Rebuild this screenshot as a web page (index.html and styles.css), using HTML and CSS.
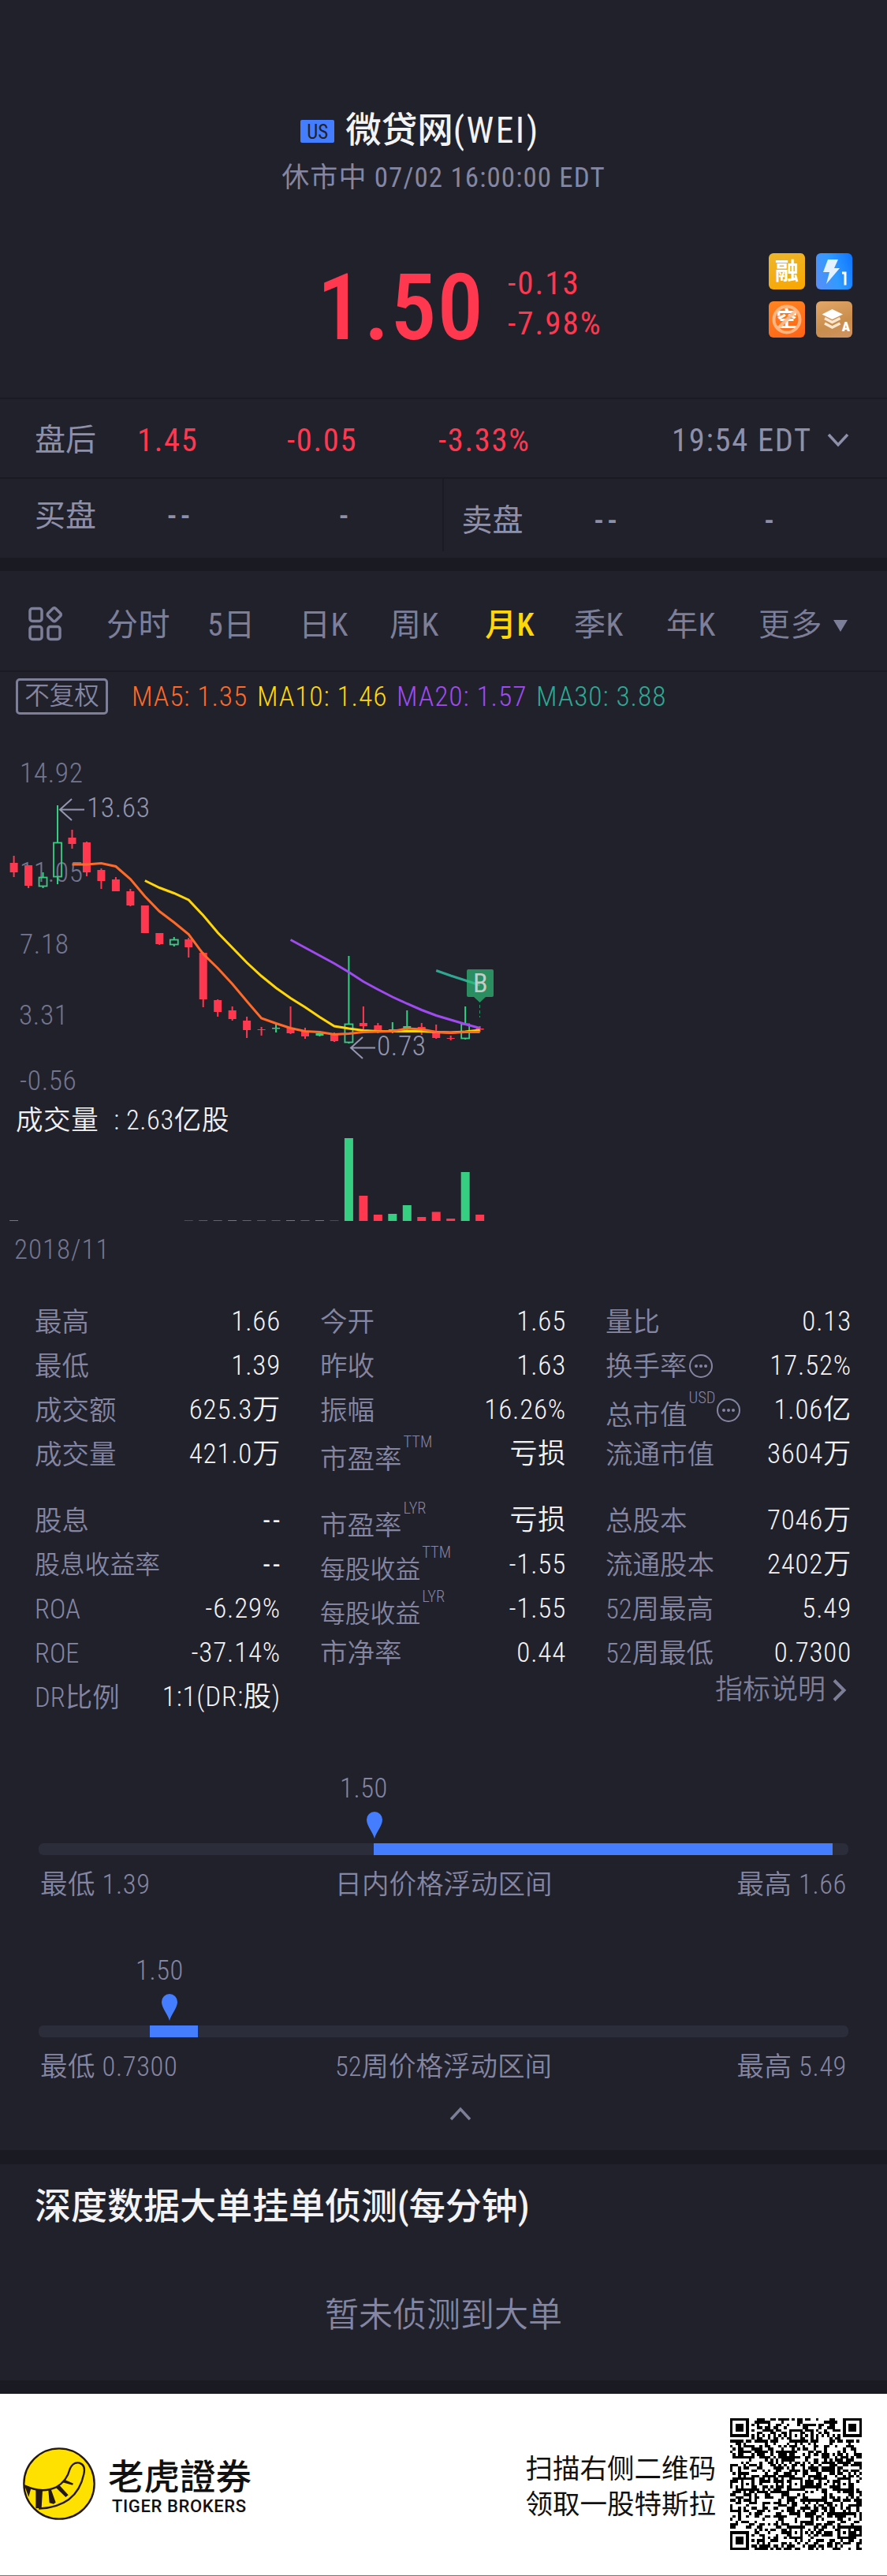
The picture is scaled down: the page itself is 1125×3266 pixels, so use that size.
FILE: index.html
```
<!DOCTYPE html>
<html lang="zh-CN">
<head>
    <meta charset="UTF-8">
    <meta name="viewport" content="width=device-width, initial-scale=1.0">
    <title>微贷网(WEI)</title>
    <link rel="stylesheet" href="styles.css">
</head>
<body>
<header class="quote">
    <div class="name"><span class="market">US</span><h1>微贷网<span>(WEI)</span></h1></div>
    <div class="status">休市中 07/02 16:00:00 EDT</div>
    <div class="price-row">
        <div class="price">1.50</div>
        <div class="change">
            <div>-0.13</div>
            <div>-7.98%</div>
        </div>
        <div class="tags">
            <div class="tag tag-margin">融</div>
            <div class="tag tag-level">
                <svg width="46" height="46" viewBox="0 0 46 46">
                    <path d="M15 8h13l-5 11h7L13 39l4-15H9z" fill="#e4f1ff"/>
                    <path d="M33 25h4v15.500" fill="none" stroke="#fff" stroke-width="3"/>
                </svg>
            </div>
            <div class="tag tag-short">空
                <svg width="46" height="46" viewBox="0 0 46 46">
                    <g fill="none" stroke="#ffbd8c" stroke-width="4" opacity=".9">
                        <circle cx="23" cy="23" r="16.500"/>
                        <path d="M11.500 34.500l23-23"/>
                    </g>
                </svg>
            </div>
            <div class="tag tag-depth">
                <svg width="46" height="46" viewBox="0 0 46 46">
                    <path d="M20.500 10L34 16.500 20.500 23 7.500 16.500z" fill="#fff"/>
                    <path d="M11 21.500l9.500 5 10-5M11 28l9.500 5 10-5" fill="none" stroke="#fbe6d0" stroke-width="3.500"/>
                </svg>
                <b>A</b>
            </div>
        </div>
    </div>
</header>

<section class="after">
    <span class="label">盘后</span>
    <span class="down">1.45</span>
    <span class="down">-0.05</span>
    <span class="down">-3.33%</span>
    <span class="time">19:54 EDT</span>
    <svg width="28" height="18" viewBox="0 0 28 18"><path d="M2 2l12 13L26 2" fill="none" stroke="#8e90aa" stroke-width="3.500"/></svg>
</section>
<section class="book">
    <div class="side buy"><span>买盘</span><b>--</b><b>-</b></div>
    <div class="side sell"><span>卖盘</span><b>--</b><b>-</b></div>
</section>

<nav class="tabs">
    <svg width="44" height="44" viewBox="0 0 44 44">
        <g fill="none" stroke="#7d7f99" stroke-width="3.500">
            <rect x="2" y="2.500" width="15" height="16" rx="3"/>
            <rect x="2" y="25.500" width="15" height="16" rx="3"/>
            <rect x="25" y="25.500" width="15" height="16" rx="3"/>
            <rect x="26" y="3.500" width="13.500" height="13.500" rx="2.500" transform="rotate(45 32.800 10.300)"/>
        </g>
    </svg>
    <span>分时</span>
    <span>5日</span>
    <span>日K</span>
    <span>周K</span>
    <span class="active">月K</span>
    <span>季K</span>
    <span>年K</span>
    <span class="more">更多<i></i></span>
</nav>

<section class="chart">
    <div class="ma">
        <span class="adjust">不复权</span>
        <span class="ma5">MA5: 1.35</span>
        <span class="ma10">MA10: 1.46</span>
        <span class="ma20">MA20: 1.57</span>
        <span class="ma30">MA30: 3.88</span>
    </div>
    <svg class="kline" width="1125" height="480" viewBox="0 0 1125 480">
        <g class="axis">
            <text x="25" y="61.500">14.92</text>
            <text x="25" y="188">11.05</text>
            <text x="25" y="279">7.18</text>
            <text x="24" y="369">3.31</text>
            <text x="25" y="452">-0.56</text>
        </g>
        <g id="candles"></g>
        <g id="lines"></g>
        <g class="marks">
            <path d="M107 96.500H76M91 83L76 96.500 91 110"/>
            <text x="110" y="106">13.63</text>
            <path d="M476 398.500H445M460 385l-15 13.500 15 13.500"/>
            <text x="478" y="407.500">0.73</text>
        </g>
        <g class="buy-flag">
            <path d="M594 299h30q2 0 2 2v31q0 2-2 2h-8l-7.500 7-7.500-7h-7q-2 0-2-2v-31q0-2 2-2z"/>
            <path class="dash" d="M608.500 344v16"/>
            <text x="609.500" y="328">B</text>
        </g>
    </svg>
    <div class="volume-title">成交量<span>:</span>2.63亿股</div>
    <svg class="volume" width="1125" height="110" viewBox="0 0 1125 110"><g id="bars"></g></svg>
    <div class="date">2018/11</div>
</section>

<section class="stats">
    <div class="row"><span>最高</span><b>1.66</b></div>
    <div class="row"><span>今开</span><b>1.65</b></div>
    <div class="row"><span>量比</span><b>0.13</b></div>

    <div class="row"><span>最低</span><b>1.39</b></div>
    <div class="row"><span>昨收</span><b>1.63</b></div>
    <div class="row"><span>换手率</span><svg class="tip" width="32" height="32" viewBox="0 0 32 32"><use href="#tip"/></svg><b>17.52%</b></div>

    <div class="row"><span>成交额</span><b>625.3万</b></div>
    <div class="row"><span>振幅</span><b>16.26%</b></div>
    <div class="row"><span class="low">总市值</span><sup>USD</sup><svg class="tip" width="32" height="32" viewBox="0 0 32 32"><use href="#tip"/></svg><b>1.06亿</b></div>

    <div class="row"><span>成交量</span><b>421.0万</b></div>
    <div class="row"><span class="low">市盈率</span><sup>TTM</sup><b>亏损</b></div>
    <div class="row"><span>流通市值</span><b>3604万</b></div>

    <div class="row gap"><span>股息</span><b class="empty">--</b></div>
    <div class="row gap"><span class="low">市盈率</span><sup>LYR</sup><b>亏损</b></div>
    <div class="row gap"><span>总股本</span><b>7046万</b></div>

    <div class="row"><span class="small">股息收益率</span><b class="empty">--</b></div>
    <div class="row"><span class="low small">每股收益</span><sup>TTM</sup><b>-1.55</b></div>
    <div class="row"><span>流通股本</span><b>2402万</b></div>

    <div class="row"><span>ROA</span><b>-6.29%</b></div>
    <div class="row"><span class="low small">每股收益</span><sup>LYR</sup><b>-1.55</b></div>
    <div class="row"><span>52周最高</span><b>5.49</b></div>

    <div class="row"><span>ROE</span><b>-37.14%</b></div>
    <div class="row"><span>市净率</span><b>0.44</b></div>
    <div class="row"><span>52周最低</span><b>0.7300</b></div>

    <div class="row"><span>DR比例</span><b>1:1(DR:股)</b></div>
    <div class="row"></div>
    <div class="row help">指标说明<svg width="18" height="28" viewBox="0 0 18 28"><path d="M2 1.500L14.500 14 2 26.500" fill="none" stroke="#7d7f99" stroke-width="4"/></svg></div>
</section>

<section class="ranges">
    <div class="range">
        <div class="now" style="margin-left: 382px">1.50</div>
        <svg class="pin" style="margin-left: 416px" width="20" height="34" viewBox="0 0 20 34"><path d="M10 34C8 26 0 18 0 10a10 10 0 0 1 20 0c0 8-8 16-10 24z" fill="#457dff"/></svg>
        <div class="track"><div class="fill" style="margin-left: 425px; width: 582px"></div></div>
        <div class="ends"><span>最低 1.39</span><span>日内价格浮动区间</span><span>最高 1.66</span></div>
    </div>
    <div class="range">
        <div class="now" style="margin-left: 123px">1.50</div>
        <svg class="pin" style="margin-left: 156px" width="20" height="34" viewBox="0 0 20 34"><path d="M10 34C8 26 0 18 0 10a10 10 0 0 1 20 0c0 8-8 16-10 24z" fill="#457dff"/></svg>
        <div class="track"><div class="fill" style="margin-left: 141px; width: 61px"></div></div>
        <div class="ends"><span>最低 0.7300</span><span>52周价格浮动区间</span><span>最高 5.49</span></div>
    </div>
    <svg class="collapse" width="28" height="18" viewBox="0 0 28 18"><path d="M2 16L14 3l12 13" fill="none" stroke="#7d7f99" stroke-width="3.500"/></svg>
</section>

<section class="depth">
    <h2>深度数据大单挂单侦测(每分钟)</h2>
    <p>暂未侦测到大单</p>
</section>

<footer class="footer">
    <svg class="logo" width="92" height="92" viewBox="0 0 276 276">
        <circle cx="138" cy="138" r="134" fill="#ffe100" stroke="#231815" stroke-width="7"/>
        <path d="M7 146q66 30 118 6 42-22 54-70 12-28 36-23 25 8 17 42-26 125-172 132" fill="none" stroke="#231815" stroke-width="7"/>
        <path d="M5 142l27 10-10 36zM49 162h26l-4 68-22 2zM97 162l10-3 18 50-8 6-16-4zM126 153l14-8 33 36-10 8zM151 133l9-10 32 14-3 6z" fill="#231815"/>
    </svg>
    <div class="brand">
        <div class="brand-cn">老虎證券</div>
        <div class="brand-en">TIGER BROKERS</div>
    </div>
    <div class="scan">扫描右侧二维码<br>领取一股特斯拉</div>
    <svg class="qr" width="167" height="167" viewBox="0 0 49 49" shape-rendering="crispEdges"><path id="qr"/></svg>
</footer>

<svg width="0" height="0" class="defs">
    <symbol id="tip" viewBox="0 0 32 32">
        <circle cx="16" cy="16" r="14" fill="none" stroke="#8486a2" stroke-width="2"/>
        <g fill="#8486a2"><circle cx="10" cy="16" r="2"/><circle cx="16" cy="16" r="2"/><circle cx="22" cy="16" r="2"/></g>
    </symbol>
</svg>
<script src="chart.js"></script>
</body>
</html>
```
FILE: styles.css
```
* {
    box-sizing: border-box;
}
body {
    margin: 0;
    width: 1125px;
    background-color: #21212b;
    color: #8486a2;
    font-family: Roboto, "Noto Sans CJK SC", sans-serif;
    font-stretch: 87%;
    font-size: 35px;
    line-height: 50px;
}
h1, h2, p {
    margin: 0;
    font-weight: 500;
}
svg {
    display: block;
    flex: none;
}
.quote {
    height: 506px;
    padding-top: 135px;
    border-bottom: 2px solid #1a1a23;
}
.name {
    display: flex;
    justify-content: center;
    align-items: center;
    height: 60px;
    padding: 2px 59px 0 0;
}
.name h1 {
    font-size: 45.500px;
    color: #f3f3f5;
}
.name h1 span {
    font-weight: 400;
    letter-spacing: 2.5px;
}
.market {
    width: 43px;
    height: 29px;
    margin-right: 14px;
    border-radius: 2px;
    background-color: #457dff;
    color: #21212b;
    font-size: 25px;
    line-height: 31px;
    text-align: center;
}
.status {
    margin-top: 6px;
    text-align: center;
    letter-spacing: 1.1px;
}
.price-row {
    display: flex;
    margin-top: 70px;
    padding-left: 402px;
    color: #ff3850;
}
.price {
    width: 242px;
    font-size: 117px;
    font-weight: 500;
    letter-spacing: 1px;
    line-height: 138px;
}
.change {
    width: 331px;
    padding-top: 13px;
    font-size: 41px;
    line-height: 51px;
    letter-spacing: 2px;
}
.tags {
    display: grid;
    grid-template-columns: 46px 46px;
    grid-auto-rows: 46px;
    gap: 15px 14px;
}
.tag {
    position: relative;
    border-radius: 6px;
    color: #fff;
    text-align: center;
    font-weight: 700;
    font-size: 30px;
    line-height: 46px;
}
.tag svg {
    position: absolute;
    left: 0;
    top: 0;
}
.tag b {
    position: absolute;
    right: 3px;
    bottom: 6px;
    font-size: 17px;
    line-height: 16px;
}
.tag-margin {
    background: linear-gradient(160deg, #edb62c, #f9a600);
}
.tag-level {
    background: linear-gradient(70deg, #5b8df5, #2f9bff 50%, #0d74ff);
}
.tag-short {
    background: linear-gradient(160deg, #ff8420, #ff6416);
    font-size: 27px;
}
.tag-depth {
    background: linear-gradient(160deg, #e3a768, #c98d4c 60%, #cf9363);
}
.after {
    display: grid;
    grid-template-columns: 130px 190px 192px 296px 197px 28px;
    align-items: center;
    height: 101px;
    padding: 4px 0 0 44px;
    border-bottom: 2px solid #1a1a23;
    font-size: 40.500px;
    color: #8e90aa;
}
.after .label {
    font-size: 39px;
}
.after .time {
    letter-spacing: 1.7px;
}
.down {
    color: #ff3850;
    letter-spacing: 1.7px;
}
.book {
    display: flex;
    height: 117px;
    border-bottom: 17px solid #1a1a23;
    font-size: 39px;
}
.book b {
    font-weight: 500;
    letter-spacing: 5px;
}
.side {
    display: grid;
    align-items: center;
    width: 563px;
    height: 92px;
    color: #8e90aa;
}
.buy {
    grid-template-columns: 168px 218px 1fr;
    padding: 2px 0 0 44px;
    border-right: 2px solid #1a1a23;
}
.sell {
    grid-template-columns: 168px 216px 1fr;
    padding: 13px 0 0 23px;
}
.tabs {
    display: grid;
    grid-template-columns: 99px 128px 116px 115px 121px 113px 117px 117px auto;
    align-items: center;
    height: 128px;
    padding: 8px 0 0 36px;
    border-bottom: 2px solid #1a1a23;
    font-size: 40px;
    color: #7d7f99;
}
.tabs span {
    padding-top: 4px;
    letter-spacing: 0.5px;
}
.tabs .active {
    color: #ffd60a;
    font-weight: 500;
}
.tabs .more {
    display: flex;
    align-items: center;
    font-weight: 350;
}
.more i {
    margin-left: 14px;
    border: 9px solid transparent;
    border-top: 15px solid #7d7f99;
    border-bottom: 0;
}
.ma {
    display: flex;
    align-items: center;
    height: 62px;
    padding-left: 20px;
    font-size: 35.500px;
    font-weight: 350;
    letter-spacing: 0.9px;
}
.ma span {
    white-space: nowrap;
}
.ma .adjust {
    width: 117px;
    height: 46px;
    margin-right: 30px;
    border: 3px solid #7d7f99;
    border-radius: 5px;
    font-size: 31.500px;
    line-height: 40px;
    letter-spacing: 0;
    text-align: center;
}
.ma5 { width: 159px; color: #ff6a28; }
.ma10 { width: 177px; color: #ffd60a; }
.ma20 { width: 177px; color: #a04bf0; }
.ma30 { color: #2fa893; }
.kline {
    margin-top: 16px;
}
.kline text {
    font-size: 35.500px;
    font-weight: 350;
    letter-spacing: 0.6px;
}
.axis text {
    fill: #74768f;
}
.marks text {
    fill: #9496b0;
}
.marks path {
    fill: none;
    stroke: #9496b0;
    stroke-width: 2;
}
.buy-flag path {
    fill: #2fbd78;
    opacity: 0.7;
}
.buy-flag .dash {
    stroke: #2fbd78;
    stroke-width: 1;
    stroke-dasharray: 4 3;
}
.kline .buy-flag text {
    fill: #c4ccc8;
    font-size: 34px;
    font-weight: 400;
    text-anchor: middle;
}
.volume-title {
    height: 29px;
    padding-left: 20px;
    line-height: 20px;
    font-size: 34.500px;
    color: #f0f0f2;
    font-weight: 350;
    letter-spacing: 0.6px;
}
.volume-title span {
    margin: 0 8px 0 19px;
}
.date {
    padding-left: 18px;
    margin-top: 11px;
    font-weight: 350;
    letter-spacing: 1px;
    color: #74768f;
}
.stats {
    display: grid;
    grid-template-columns: 312px 312px 312px;
    column-gap: 50px;
    padding: 38px 45px 0 44px;
    font-weight: 350;
}
.row {
    display: flex;
    align-items: center;
    height: 56px;
}
.row span {
    font-size: 34.500px;
    white-space: nowrap;
}
.row .small {
    font-size: 31.800px;
}
.row .low {
    padding-top: 12px;
}
.row sup {
    align-self: flex-start;
    margin-left: 2px;
    font-size: 20.500px;
    line-height: 24px;
}
.row b {
    margin-left: auto;
    color: #f3f3f5;
    font-weight: 350;
    letter-spacing: 0.8px;
    white-space: nowrap;
}
.row .empty {
    font-weight: 400;
    letter-spacing: 4px;
    margin-right: -3px;
}
.row.gap {
    height: 84px;
    padding-top: 28px;
}
.tip {
    margin-left: 1px;
}
.help {
    justify-content: flex-end;
    gap: 9px;
    padding: 0 6px 19px 0;
    color: #7d7f99;
}
.ranges {
    height: 546px;
    padding: 62px 49px 0;
    font-size: 34.500px;
    font-weight: 350;
}
.now {
    letter-spacing: 0.6px;
}
.range {
    height: 231px;
}
.pin {
    margin-top: 5px;
}
.track {
    height: 15px;
    margin-top: 6px;
    border-radius: 6px;
    background-color: #2c2d3a;
}
.fill {
    height: 15px;
    background-color: #457dff;
}
.ends {
    display: flex;
    justify-content: space-between;
    padding: 12px 2px 0;
}
.ends span {
    flex: 1;
    letter-spacing: 0.6px;
}
.ends span:nth-child(2) {
    text-align: center;
    letter-spacing: 0;
}
.ends span:last-child {
    text-align: right;
}
.collapse {
    margin: -33px 0 0 521px;
}
.depth {
    height: 309px;
    border-top: 18px solid #1a1a23;
    border-bottom: 17px solid #1a1a23;
    text-align: center;
}
.depth h2 {
    padding: 28px 44px 0;
    color: #f3f3f5;
    font-size: 46px;
    text-align: left;
}
.depth p {
    margin-top: 88px;
    font-size: 43px;
    font-weight: 350;
}
.footer {
    display: flex;
    align-items: center;
    height: 232px;
    padding: 0 32px 2px 29px;
    border-bottom: 2px solid #77777d;
    background-color: #fff;
    color: #111;
}
.brand {
    flex: 1;
    margin-left: 16px;
    padding-top: 2px;
}
.brand-cn {
    font-size: 45.500px;
    font-weight: 500;
    line-height: 56px;
    font-family: "Noto Sans CJK TC", sans-serif;
}
.brand-en {
    padding-left: 5px;
    font-size: 22px;
    font-weight: 500;
    font-stretch: 100%;
    letter-spacing: 0.6px;
    line-height: 26px;
}
.scan {
    margin-right: 18px;
    padding-top: 8px;
    font-size: 34.500px;
    line-height: 45px;
}
.defs {
    position: absolute;
}
```
FILE: chart.js
```
const UP = '#36cf82';
const DOWN = '#ff3850';
const FIRST_X = 17.6;
const STEP = 18.47;

// [high, body top, body bottom, low, up]
const candles = [
    [155, 164, 176, 182, 0], [167, 167, 193, 196, 0], [176, 182, 194, 196, 1], [91, 138, 182, 191, 1],
    [122, 132, 140, 146, 0], [137, 138, 176, 181, 0], [171, 173, 187, 197, 0], [182, 185, 200, 200, 0],
    [197, 200, 218, 219, 0], [218, 218, 253, 253, 0], [253, 253, 267, 268, 0], [258, 261, 268, 270, 1],
    [259, 261, 271, 284, 0], [277, 278, 337, 347, 0], [337, 338, 353, 359, 0], [346, 351, 362, 364, 0],
    [359, 364, 376, 386, 0], [372, 375, 376, 383, 0], [368, 373, 374.5, 379, 1], [346, 373, 380, 381, 0],
    [373, 378, 384, 387, 0], [377, 380, 383, 384, 1], [379, 381, 390, 391, 0], [282, 368, 392, 393, 1],
    [346, 367, 371, 375, 0], [367, 370, 379, 380, 0], [366, 375, 376, 380, 1], [351, 371, 375, 376, 1],
    [367, 372, 378, 382, 0], [369, 377, 386, 387, 0], [383, 386, 387, 389, 0], [346, 368, 387, 388, 1],
    [371, 374, 375.5, 378, 0]
];

const averages = [
    { start: 29, color: '#2fa893', y: [300.5, 307, 313, 319] },
    { start: 19, color: '#a04bf0', y: [261.5, 271.5, 281.5, 291.5, 302.5, 314.5, 324.5, 334, 342.5, 350.5, 357.5, 363, 368.5, 373.5] },
    { start: 9, color: '#ffd60a', y: [186.5, 195.5, 202.5, 211, 230.5, 252.5, 271.5, 290.5, 307.5, 322.5, 335.5, 347, 359.5, 371, 374, 376.5, 377.5, 377.5, 377.5, 377.5, 378.5, 379, 378, 376] },
    { start: 4, color: '#ff6a28', y: [166, 166, 164.5, 168.5, 184.5, 206.5, 225.5, 239.5, 254.5, 279.5, 297.5, 317.5, 339.5, 361, 367.5, 373.5, 377.5, 378.5, 381.5, 380.5, 378.5, 378, 377.5, 374, 375, 378.5, 379.5, 378.5, 378.5] }
];

const volumes = [1, 0, 0, 0, 0, 0, 0, 0, 0, 0, 0, 0, 0.5, 0.7, 0.8, 1, 0.8, 0.7, 0.5, 1, 0.8, 0.7, 0.5, 105, 32, 8, 9, 20, 5, 11.5, 3, 62, 8];

const x = i => FIRST_X + STEP * i;

document.getElementById('candles').innerHTML = candles.map(([high, top, bottom, low, up], i) => {
    const color = up ? UP : DOWN;
    const wick = `<path d="M${x(i)} ${high}V${top}M${x(i)} ${bottom}V${low}" stroke="${color}" stroke-width="2"/>`;
    if (up && bottom - top > 5) {
        return wick + `<rect x="${x(i) - 5}" y="${top + 0.5}" width="10" height="${bottom - top - 1}" fill="none" stroke="${color}" stroke-width="1.8"/>`;
    }
    return wick + `<rect x="${x(i) - 5}" y="${top}" width="10" height="${bottom - top}" fill="${color}"/>`;
}).join('');

document.getElementById('lines').innerHTML = averages.map(({ start, color, y }) =>
    `<polyline points="${y.map((v, i) => x(start + i) + ',' + v).join(' ')}" fill="none" stroke="${color}" stroke-width="3"/>`
).join('');

document.getElementById('bars').innerHTML = volumes.map((v, i) =>
    `<rect x="${x(i) - 5.5}" y="${109 - v}" width="11" height="${v}" fill="${candles[i][4] ? UP : DOWN}"/>`
).join('');

// QR code, 49 modules a side
const SIZE = 49;
const ring = (dx, dy) => Math.max(Math.abs(dx), Math.abs(dy));
let seed = 20200702;
let path = '';
for (let r = 0; r < SIZE; r++) {
    for (let c = 0; c < SIZE; c++) {
        seed = (seed * 1103515245 + 12345) % 2147483648;
        let dark = (seed >> 16) % 2 === 0;
        if (r === 6 || c === 6) dark = (r + c) % 2 === 0;
        for (const [ar, ac] of [[6, 24], [24, 6], [24, 24], [24, 42], [42, 24], [42, 42]]) {
            const d = ring(r - ar, c - ac);
            if (d <= 2) dark = d !== 1;
        }
        for (const [fr, fc] of [[3, 3], [3, 45], [45, 3]]) {
            const d = ring(r - fr, c - fc);
            if (d <= 4) dark = d !== 2 && d !== 4;
        }
        if (dark) path += `M${c} ${r}h1v1h-1z`;
    }
}
document.getElementById('qr').setAttribute('d', path);
```
